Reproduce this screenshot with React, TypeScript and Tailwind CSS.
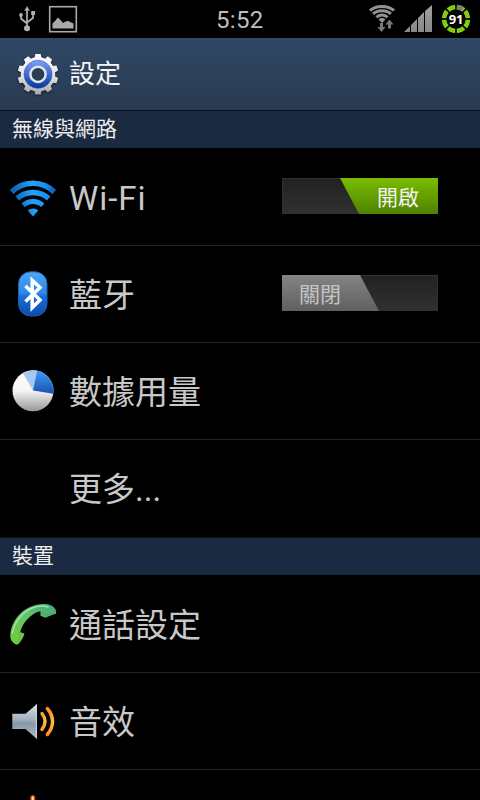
import type { ReactNode } from "react";

export default function App() {
  return (
    <div className="h-[800px] w-[480px] overflow-hidden bg-black font-['Roboto','Noto_Sans_CJK_TC',sans-serif]">
      <StatusBar />
      <header className="flex h-[72px] items-center bg-linear-to-b from-[#304866] to-[#283a50] pl-[14px]">
        <GearIcon />
        <h1 className="ml-[7px] text-[26px] leading-none text-[#f4f4f4]">設定</h1>
      </header>
      <Section title="無線與網路" />
      <Row icon={<WifiIcon />} label="Wi-Fi" latin>
        <Toggle on />
      </Row>
      <Row icon={<BluetoothIcon />} label="藍牙">
        <Toggle />
      </Row>
      <Row icon={<PieIcon />} label="數據用量" />
      <Row label="更多..." last />
      <Section title="裝置" />
      <Row icon={<PhoneIcon />} label="通話設定" />
      <Row icon={<SpeakerIcon />} label="音效" />
      <Row icon={<DisplayIcon />} label="" />
    </div>
  );
}

function Section({ title }: { title: string }) {
  return (
    <div className="flex h-[39px] items-center border-y border-t-[#07101a] border-b-black bg-[#1a2a40] pl-3 text-[21px] leading-none text-[#ededed]">
      <span className="mt-[-1px]">{title}</span>
    </div>
  );
}

function Row({ icon, label, last, latin, children }: { icon?: ReactNode; label: string; last?: boolean; latin?: boolean; children?: ReactNode }) {
  return (
    <div className={`flex h-[97px] items-center border-b pr-[42px] pl-[9px] ${last ? "border-black" : "border-[#262626]"}`}>
      <div className="h-12 w-[60px] shrink-0">{icon}</div>
      <span className={`grow text-[33px] leading-none text-[#c8c8c8] ${latin ? "mt-[2px] tracking-[0.95px]" : "mt-[2px]"}`}>{label}</span>
      {children}
    </div>
  );
}

function Toggle({ on }: { on?: boolean }) {
  return (
    <div className="mt-[-2px] h-9 w-[156px] border border-[#303030] bg-linear-to-b from-[#222] to-[#303030]">
      {on ? (
        <div className="-m-px ml-[57px] flex h-9 w-[98px] items-center bg-linear-to-b from-[#7abd00] to-[#508200] pl-[37px] text-[21px] leading-none text-[#f2f2f2] [clip-path:polygon(0_0,100%_0,100%_100%,19px_100%)]">
          <span className="mt-[4px]">開啟</span>
        </div>
      ) : (
        <div className="-m-px flex h-9 w-[97px] items-center bg-linear-to-b from-[#848484] to-[#606060] pl-[17px] text-[21px] leading-none text-[#c4c4c4] [clip-path:polygon(0_0,78px_0,100%_100%,0_100%)]">
          <span className="mt-[4px]">關閉</span>
        </div>
      )}
    </div>
  );
}

function StatusBar() {
  return (
    <div className="flex h-[38px] text-[#bebebe]">
      <svg width="200" height="38" viewBox="0 0 200 38">
        <g fill="#b0b0b0" stroke="#b0b0b0">
          <path d="M27 10v18M21 15v3.500l6 5M33 14v4l-6 4.500" fill="none" strokeWidth="1.700" />
          <path d="M27 6.500l2.300 4h-4.600z" strokeWidth="0.500" />
          <circle cx="21" cy="15" r="1.900" stroke="none" />
          <path d="M31.200 11h3.900v3.900h-3.900z" stroke="none" />
          <circle cx="27" cy="28.200" r="3" stroke="none" />
        </g>
        <rect x="49.700" y="6.700" width="26.600" height="25" fill="none" stroke="#aaa" strokeWidth="1.600" />
        <path d="M52.500 28.500v-5l2.500-2.500 3-3.500 2.500 2.500 2.500 3 2.500-1.500 3-.5 2.500 1.500 2.500 1v5z" fill="#aaa" />
      </svg>
      <span className="mt-[7px] ml-4 w-[149px] text-[24px] leading-[26px] tracking-[0.3px]">5:52</span>
      <svg width="115" height="38" viewBox="365 0 115 38">
        <defs>
          <clipPath id="smallWedge">
            <path d="M382 23L366 6.500V0h32v6.500z" />
          </clipPath>
          <linearGradient id="signal" x1="0" y1="0" x2="0" y2="1">
            <stop stopColor="#a0a0a0" />
            <stop offset="1" stopColor="#888" />
          </linearGradient>
        </defs>
        <g clipPath="url(#smallWedge)" fill="none" stroke="#929292" strokeWidth="3">
          <ellipse cx="382" cy="23" rx="18.500" ry="16.500" />
          <ellipse cx="382" cy="23" rx="13.500" ry="12.200" />
          <circle cx="382" cy="23" r="8" />
          <circle cx="382" cy="23" r="2.500" strokeWidth="5" />
        </g>
        <path d="M380 23h3v4h2.500l-4 5-4-5h2.500zM389.500 19.500l4 5H391v4h-3v-4h-2.500z" fill="#777" />
        <path d="M404 32l6-6v6zM411 25l6-6v13h-6zM418 18l6-6v20h-6zM425 11l7-6v27h-7z" fill="url(#signal)" />
        <circle cx="456" cy="19" r="12" fill="none" stroke="#84cc0c" strokeWidth="4.600" pathLength="100" strokeDasharray="10.300 2.200" strokeDashoffset="-1.1" transform="rotate(-90 456 19)" />
        <path d="M456.900 7.030A12 12 0 0 1 462.700 9.050" fill="none" stroke="#808080" strokeWidth="4.800" />
        <text x="456" y="23.700" textAnchor="middle" fill="#fff" className="font-['Noto_Sans',sans-serif] text-[13px] font-bold tracking-[-0.3px]">91</text>
      </svg>
    </div>
  );
}

function GearIcon() {
  const teeth = Array.from({ length: 10 }, (_, i) => i * 36);
  return (
    <svg width="48" height="48" viewBox="0 0 48 48">
      <defs>
        <linearGradient id="steel" gradientUnits="userSpaceOnUse" x1="0" y1="3" x2="0" y2="45">
          <stop stopColor="#fff" />
          <stop offset="0.550" stopColor="#e2e2e2" />
          <stop offset="1" stopColor="#a5a5a5" />
        </linearGradient>
        <linearGradient id="gearBlue" x1="0" y1="0" x2="0" y2="1">
          <stop stopColor="#7ba2ff" />
          <stop offset="0.500" stopColor="#4169cf" />
          <stop offset="1" stopColor="#003a96" />
        </linearGradient>
        <mask id="teeth">
          <circle cx="24" cy="24.300" r="17.200" fill="#fff" />
          {teeth.map((a) => (
            <path key={a} d="M20.300 9.300l1-5.300h5.400l1 5.300z" fill="#fff" transform={`rotate(${a} 24 24.300)`} />
          ))}
        </mask>
      </defs>
      <g className="drop-shadow-[0_1px_1px_rgba(0,0,0,0.6)]">
        <rect width="48" height="48" fill="url(#steel)" mask="url(#teeth)" />
      </g>
      <circle cx="24" cy="24.300" r="14" fill="url(#gearBlue)" stroke="#3158b5" strokeWidth="0.600" />
      <circle cx="24" cy="24.300" r="7.600" fill="#293d57" stroke="#e4e4e4" strokeWidth="2.500" />
    </svg>
  );
}

function WifiIcon() {
  return (
    <svg width="48" height="48" viewBox="0 0 48 48">
      <defs>
        <linearGradient id="wifiBlue" gradientUnits="userSpaceOnUse" x1="1" y1="20" x2="46" y2="14">
          <stop stopColor="#0758ae" />
          <stop offset="0.500" stopColor="#24a2fb" />
          <stop offset="0.800" stopColor="#168cf0" />
          <stop offset="1" stopColor="#0757b3" />
        </linearGradient>
        <clipPath id="wedge">
          <path d="M24 43.500L1.300 17.500L-4 11V0h56v11L46.700 17.500z" />
        </clipPath>
      </defs>
      <g clipPath="url(#wedge)" fill="none" stroke="url(#wifiBlue)">
        <ellipse cx="24" cy="43.500" rx="31.800" ry="33.200" strokeWidth="5.600" />
        <circle cx="24" cy="43.500" r="24" strokeWidth="5.400" />
        <circle cx="24" cy="43.500" r="15" strokeWidth="5" />
        <circle cx="24" cy="43.500" r="4" strokeWidth="8" />
      </g>
    </svg>
  );
}

function BluetoothIcon() {
  return (
    <svg width="48" height="48" viewBox="0 0 48 48">
      <defs>
        <linearGradient id="btBlue" x1="0" y1="0" x2="0" y2="1">
          <stop stopColor="#4fa4f6" />
          <stop offset="0.480" stopColor="#2e88ea" />
          <stop offset="0.550" stopColor="#1b6fda" />
          <stop offset="1" stopColor="#0c4ba6" />
        </linearGradient>
      </defs>
      <rect x="9.500" y="1.800" width="28.500" height="44.200" rx="12" fill="url(#btBlue)" stroke="#1762b8" />
      <path d="M16.500 16l14.500 14-7.800 7.800V10.200L31 17.500 16.500 31.500" fill="none" stroke="#fff" strokeWidth="3.500" />
    </svg>
  );
}

function PieIcon() {
  return (
    <svg width="48" height="48" viewBox="0 0 48 48">
      <defs>
        <linearGradient id="pieWhite" x1="0" y1="0" x2="0" y2="1">
          <stop stopColor="#fff" />
          <stop offset="0.500" stopColor="#f4f4f4" />
          <stop offset="1" stopColor="#989898" />
        </linearGradient>
        <linearGradient id="pieBlue" x1="0" y1="0" x2="0" y2="1">
          <stop stopColor="#409cf2" />
          <stop offset="1" stopColor="#1a51b4" />
        </linearGradient>
      </defs>
      <circle cx="24" cy="23.700" r="20.500" fill="url(#pieWhite)" />
      <path d="M24 23.500L13.800 6A20.500 20.500 0 0 1 28 3.600z" fill="#a5c9f0" />
      <path d="M24 23.500L28 3.600A20.500 20.500 0 0 1 44.300 26.700z" fill="url(#pieBlue)" />
    </svg>
  );
}

function PhoneIcon() {
  return (
    <svg width="48" height="48" viewBox="0 0 48 48">
      <defs>
        <linearGradient id="phoneGreen" x1="1" y1="0" x2="0" y2="1">
          <stop stopColor="#43a878" />
          <stop offset="0.500" stopColor="#64c568" />
          <stop offset="1" stopColor="#70cc35" />
        </linearGradient>
      </defs>
      <path d="M1.300 37C1 30 4 20 13 12 21 5 32 3 39 4.300c4 1 8 4 8 7v2.500c-3 1-7 2-10.500 4l-5-2v-4.500C23 12.500 13 23 11.300 32.300L15.500 33.500c-1 3.500-3 7.500-6.500 11-3 .5-7.300-3-7.700-7.500z" fill="url(#phoneGreen)" />
      <path d="M3.500 33C5 23 12 14 20 9.500 27 6 34 5.500 39 7" fill="none" stroke="#a2e0a8" strokeWidth="1.500" strokeLinecap="round" />
      <path d="M33 13l4 2.300 9-2.500M9.500 32.500l2 3-2.500 6.500" fill="none" stroke="#3c9a55" strokeWidth="1" opacity="0.500" />
    </svg>
  );
}

function SpeakerIcon() {
  return (
    <svg width="48" height="48" viewBox="0 0 48 48">
      <defs>
        <linearGradient id="speaker" x1="0" y1="0" x2="0" y2="1">
          <stop stopColor="#dce0e4" />
          <stop offset="0.450" stopColor="#a2b0bc" />
          <stop offset="0.550" stopColor="#8699a8" />
          <stop offset="1" stopColor="#b0bdc7" />
        </linearGradient>
        <linearGradient id="wave" gradientUnits="userSpaceOnUse" x1="0" y1="10" x2="0" y2="39">
          <stop stopColor="#ff8620" />
          <stop offset="0.500" stopColor="#ffb94a" />
          <stop offset="1" stopColor="#ff8b10" />
        </linearGradient>
      </defs>
      <path d="M3.300 16.700h13.200L28 7v35L16.500 32H3.300z" fill="url(#speaker)" />
      <path d="M27.300 7.500v33.700" stroke="#d4dadd" strokeWidth="1" />
      <path d="M33 16.500c4 5 4 11 0 16M38.300 11.500c7 8 7 18 0 26" fill="none" stroke="url(#wave)" strokeWidth="3.500" strokeLinecap="round" />
    </svg>
  );
}

function DisplayIcon() {
  return (
    <svg width="48" height="48" viewBox="0 0 48 48">
      <rect x="21.800" y="1.500" width="4" height="10" rx="2" fill="#ff8330" stroke="#c64b0b" strokeWidth="0.800" />
      <path d="M23.800 2.800v8" stroke="#fff0d0" strokeWidth="1.300" />
    </svg>
  );
}
